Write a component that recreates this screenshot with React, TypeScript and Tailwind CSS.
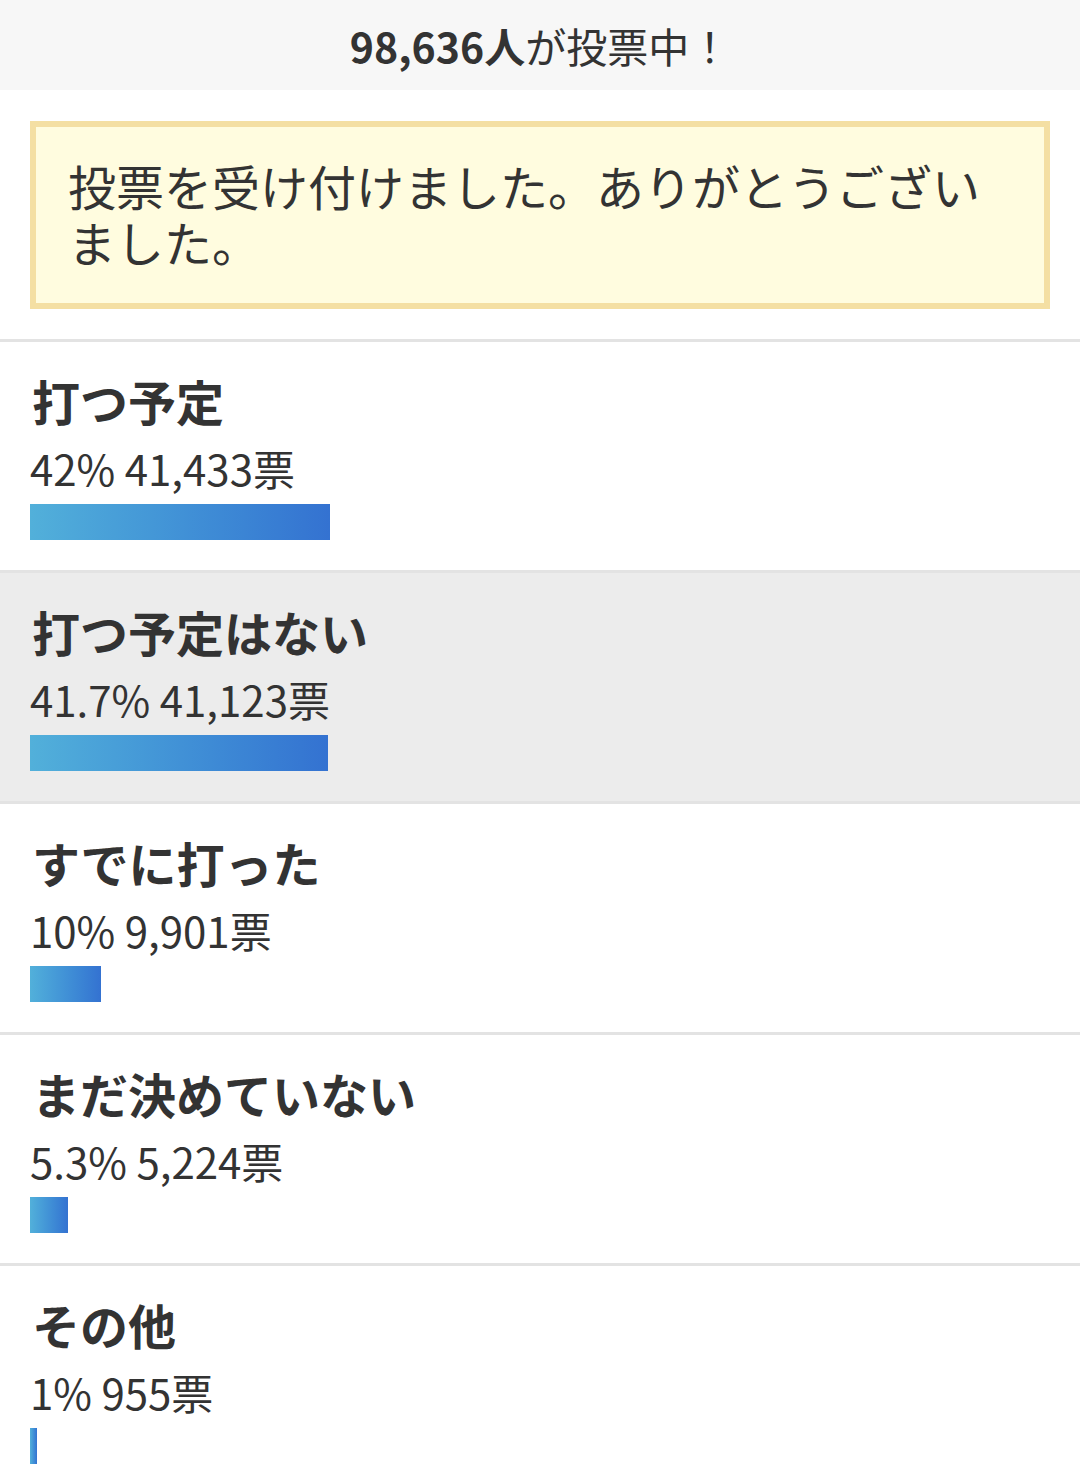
import React from "react";

const items = [
  { label: "打つ予定", pct: "42%", votes: "41,433票", w: 300, selected: false },
  { label: "打つ予定はない", pct: "41.7%", votes: "41,123票", w: 298, selected: true },
  { label: "すでに打った", pct: "10%", votes: "9,901票", w: 71, selected: false },
  { label: "まだ決めていない", pct: "5.3%", votes: "5,224票", w: 38, selected: false },
  { label: "その他", pct: "1%", votes: "955票", w: 7, selected: false },
];

export default function App() {
  return (
    <div
      className="w-[1080px] min-h-[1473px] bg-white text-[#333333]"
      style={{ fontFamily: '"Noto Sans CJK JP", "Noto Sans", sans-serif' }}
    >
      <div className="h-[90px] bg-[#f7f7f7] flex items-center justify-center text-[41px] leading-none">
        <span className="font-bold">98,636人</span>
        <span>が投票中！</span>
      </div>
      <div className="px-[30px] pt-[31px] pb-[30px]">
        <div className="border-[6px] border-[#f4dfa3] bg-[#fffcdf] px-[32px] pt-[30px] pb-[34px] text-[48px] leading-[56px]">
          投票を受け付けました。ありがとうございました。
        </div>
      </div>
      <div>
        {items.map((it) => (
          <div
            key={it.label}
            className={`border-t-[3px] border-[#e3e3e3] pl-[30px] pt-[22px] pb-[30px] ${
              it.selected ? "bg-[#ececec]" : "bg-white"
            }`}
          >
            <div className="text-[48px] font-bold leading-[72px] pl-[2px]">{it.label}</div>
            <div className="text-[42px] leading-[64px]">
              {it.pct} {it.votes}
            </div>
            <div
              className="h-[36px] mt-[4px] bg-gradient-to-r from-[#52b0da] to-[#3472d1]"
              style={{ width: it.w }}
            />
          </div>
        ))}
      </div>
    </div>
  );
}
